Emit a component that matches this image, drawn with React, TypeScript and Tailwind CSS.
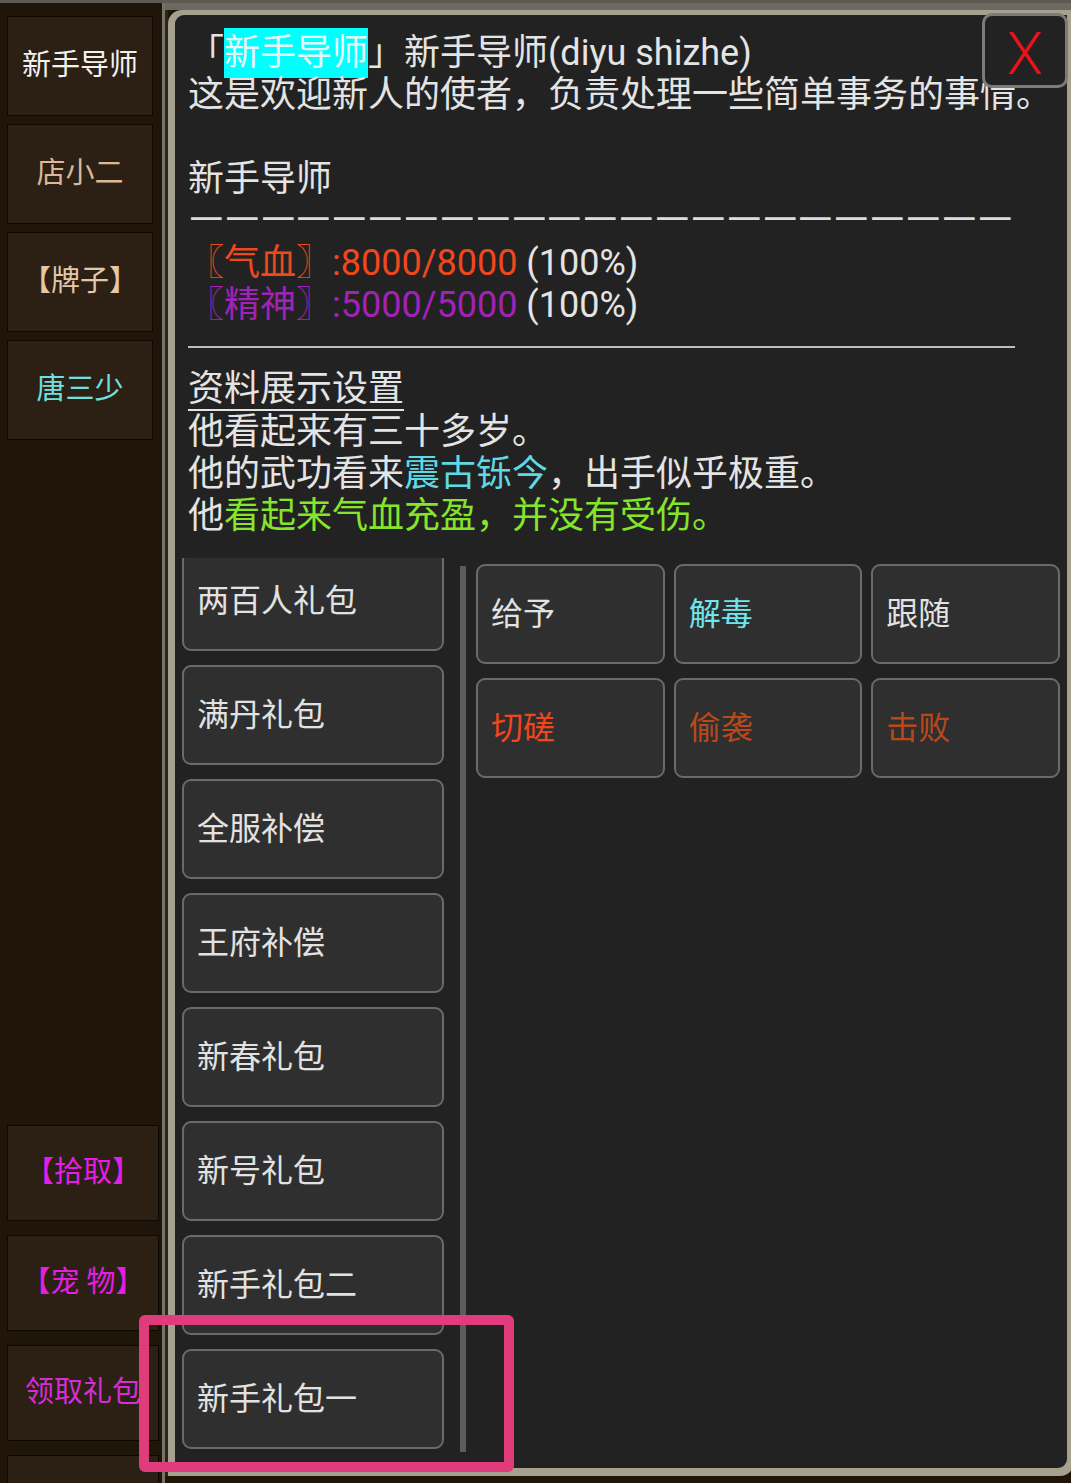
import React from "react";

const FONT = { fontFamily: 'Roboto, "Noto Sans CJK SC", sans-serif' };

function SideBtn({ label, color, wide }: { label: string; color: string; wide?: boolean }) {
  return (
    <div
      className={`flex items-center justify-center ${wide ? "w-[152px] h-[96px]" : "w-[146px] h-[100px]"} bg-[#2b2013] border border-[#0c0804] text-[29px] whitespace-nowrap overflow-visible`}
      style={{ color }}
    >
      {label}
    </div>
  );
}

function Box({ label, color, cls }: { label: string; color: string; cls: string }) {
  return (
    <div
      className={`flex items-center shrink-0 bg-[#2f2f2f] border-2 border-[#6a6a6a] rounded-[9px] pl-[13px] text-[32px] leading-none ${cls}`}
      style={{ color }}
    >
      {label}
    </div>
  );
}

export default function App() {
  const dashes = Array.from({ length: 23 }, (_, i) => i);
  const list = ["两百人礼包", "满丹礼包", "全服补偿", "王府补偿", "新春礼包", "新号礼包", "新手礼包二", "新手礼包一"];
  const acts: [string, string][] = [
    ["给予", "#e2e2e2"],
    ["解毒", "#6ee6ee"],
    ["跟随", "#e2e2e2"],
    ["切磋", "#f0461c"],
    ["偷袭", "#b8491c"],
    ["击败", "#b8481c"],
  ];
  return (
    <div className="relative w-[1071px] h-[1483px] overflow-hidden bg-[#1f1509]" style={FONT}>
      <div className="h-[3px] bg-[#5f5a51]" />
      <div className="flex h-[1480px]">
        {/* left column */}
        <div className="w-[162px] shrink-0 flex flex-col pl-[7px] pt-[13px]">
          <div className="flex flex-col gap-[8px]">
            <SideBtn label="新手导师" color="#f2f2f2" />
            <SideBtn label="店小二" color="#d9b99a" />
            <SideBtn label="【牌子】" color="#e3c8a8" />
            <SideBtn label="唐三少" color="#6fe0e0" />
          </div>
          <div className="flex flex-col gap-[14px] mt-[685px]">
            <SideBtn label="【拾取】" color="#e51ee5" wide />
            <SideBtn label="【宠 物】" color="#e51ee5" wide />
            <SideBtn label="领取礼包" color="#d42ed4" wide />
            <SideBtn label="" color="#d42ed4" wide />
          </div>
        </div>
        <div className="w-[3px] shrink-0 bg-[#77726a]" />
        {/* right area */}
        <div className="flex-1 flex flex-col">
          <div className="h-[7px] bg-[#6c6963]" />
          <div className="flex">
            <div className="w-[3px] shrink-0 bg-[#2a241c]" />
            <div className="w-[906px] shrink-0 h-[1466px] bg-[#a6a18d] border-l-[7px] border-t-[5px] border-r-[7px] border-b-[8px] border-[#a6a18d] rounded-tl-[14px] rounded-br-[14px]">
              <div className="relative h-[1453px] bg-[#222222] rounded-tl-[9px] rounded-br-[9px]">
                {/* close */}
                <div className="absolute z-10 top-[-2px] left-[807px] w-[86px] h-[75px] bg-[#222222] border-[3px] border-[#7b7b7b] rounded-[10px] flex items-center justify-center">
                  <span className="text-[59px] leading-none font-light text-[#e8141c] mt-[6px]" style={{ fontFamily: "Roboto, sans-serif" }}>
                    X
                  </span>
                </div>
                {/* text */}
                <div className="pl-[13px] pt-[17px] text-[36px] leading-[42px] text-[#e4e4e4] whitespace-nowrap">
                  <div>
                    「<span className="bg-[#00ffff] text-[#e6f6f6] py-[4px]">新手导师</span>」新手导师(diyu shizhe)
                  </div>
                  <div>这是欢迎新人的使者，负责处理一些简单事务的事情。</div>
                  <div className="h-[42px]" />
                  <div>新手导师</div>
                  <div className="flex h-[42px] leading-[40px] overflow-hidden">
                    {dashes.map((i) => (
                      <span key={i} className="inline-block w-[35.87px] text-center text-[#dcdcdc]">
                        <span className="inline-block scale-x-[1.3]">—</span>
                      </span>
                    ))}
                  </div>
                  <div>
                    <span className="text-[#ef481c]">〖气血〗:8000/8000</span> (100%)
                  </div>
                  <div>
                    <span className="text-[#a222b8]">〖精神〗:5000/5000</span> (100%)
                  </div>
                  <div className="h-[42px] flex items-center">
                    <div className="w-[827px] h-[2px] bg-[#bdbdbd]" />
                  </div>
                  <div>
                    <span className="inline-block leading-[40px] border-b-2 border-[#e4e4e4]">资料展示设置</span>
                  </div>
                  <div>他看起来有三十多岁。</div>
                  <div>
                    他的武功看来<span className="text-[#5fd9e4]">震古铄今</span>，出手似乎极重。
                  </div>
                  <div>
                    他<span className="text-[#84e52b]">看起来气血充盈，并没有受伤。</span>
                  </div>
                </div>
                {/* bottom section */}
                <div className="flex mt-[21px] pl-[7px]">
                  <div className="w-[262px] h-[900px] overflow-hidden">
                    <div className="flex flex-col gap-[14px] -mt-[7px]">
                      {list.map((l) => (
                        <Box key={l} label={l} color="#e2e2e2" cls="w-[262px] h-[100px]" />
                      ))}
                    </div>
                  </div>
                  <div className="ml-[16px] mt-[8px] w-[6px] h-[886px] bg-[#5c5c5c]" />
                  <div className="ml-[10px] mt-[6px] w-[584px] grid grid-cols-3 gap-x-[9px] gap-y-[14px] content-start">
                    {acts.map(([l, c]) => (
                      <Box key={l} label={l} color={c} cls="h-[100px]" />
                    ))}
                  </div>
                </div>
              </div>
            </div>
          </div>
        </div>
      </div>
      {/* annotation */}
      <div className="absolute left-[139px] top-[1315px] w-[375px] h-[157px] border-[10px] border-[#e03c7c] rounded-[6px] z-20" />
    </div>
  );
}
